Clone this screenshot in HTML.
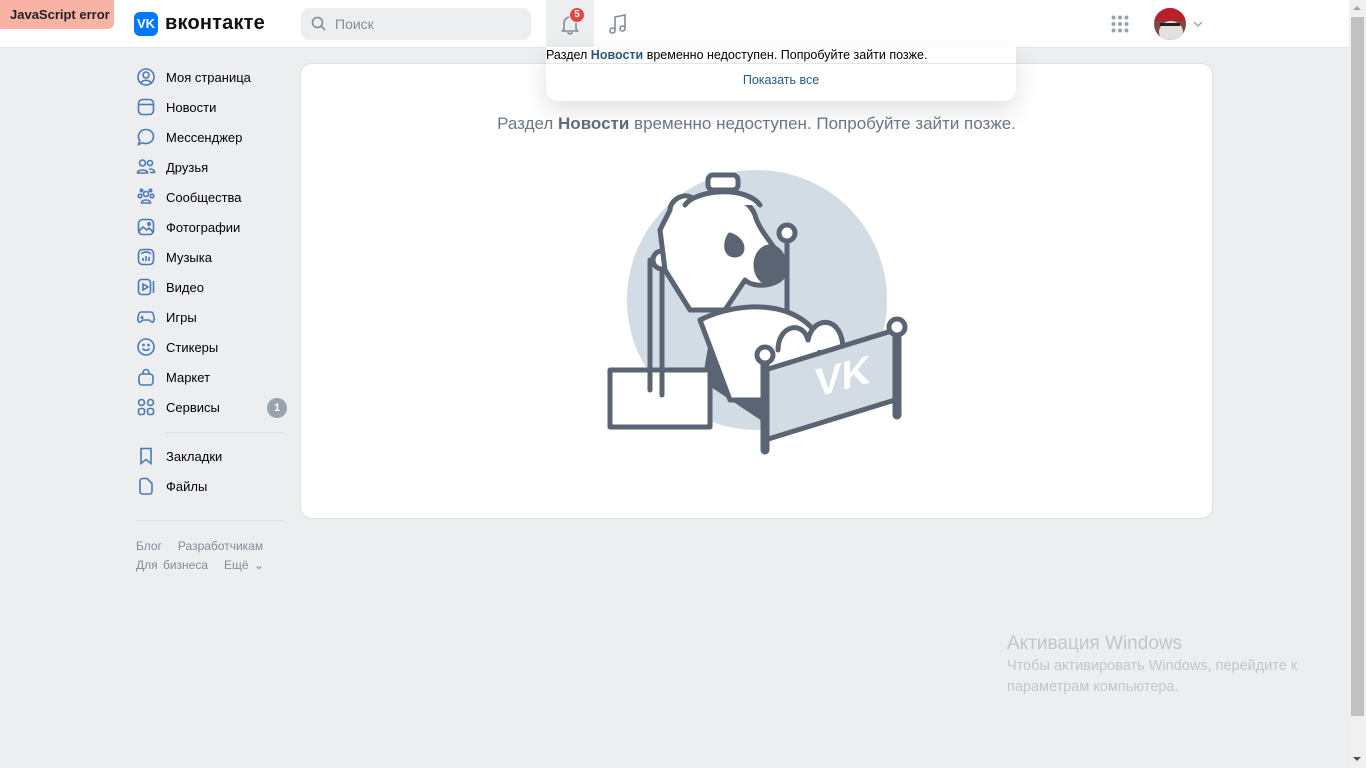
<!DOCTYPE html>
<html><head><meta charset="utf-8"><style>
*{margin:0;padding:0;box-sizing:border-box}
body{width:1366px;height:768px;background:#edeef0;font-family:"Liberation Sans","Noto Sans CJK SC",sans-serif;position:relative;overflow:hidden;color:#000}
.hdr{position:absolute;left:0;top:0;width:1349px;height:48px;background:#fff;border-bottom:1px solid #e3e4e8}
.abs{position:absolute}
.nav div{position:absolute;left:136px;height:20px;display:flex;align-items:center;font-size:13px;color:#000}
.nav svg{width:20px;height:20px;margin-right:10px;fill:none;stroke:#4b79b8;stroke-width:1.6}
.scroll{position:absolute;left:1349px;top:0;width:17px;height:768px;background:#f0f0f0}
</style></head><body>
<div class="hdr"></div>
<div class="abs" style="left:0;top:0;width:114px;height:29px;background:#f9b3a5;border-radius:0 0 6px 0;font-size:13px;font-weight:bold;color:#222;padding:7px 0 0 10px">JavaScript error</div>
<div class="abs" style="left:134px;top:12px;width:24px;height:24px;background:#0077ff;border-radius:6px;color:#fff;font-weight:bold;font-size:13px;text-align:center;line-height:24px">VK</div>
<div class="abs" style="left:165px;top:12px;font-size:20px;font-weight:bold;color:#111;letter-spacing:0.2px">вконтакте</div>
<div class="abs" style="left:301px;top:8px;width:230px;height:32px;background:#edeef0;border-radius:8px"></div>
<svg class="abs" style="left:311px;top:16px" width="16" height="16" viewBox="0 0 16 16"><circle cx="6.5" cy="6.5" r="5" fill="none" stroke="#818c99" stroke-width="1.6"/><path d="M10.3 10.3 14 14" stroke="#818c99" stroke-width="1.6"/></svg>
<div class="abs" style="left:335px;top:16px;font-size:14px;color:#818c99">Поиск</div>
<div class="abs" style="left:546px;top:0;width:48px;height:48px;background:#edeef0"></div>
<svg class="abs" style="left:559px;top:13px" width="22" height="22" viewBox="0 0 22 22"><path d="M5 16V10a6 6 0 0 1 12 0v6l1.5 2h-15z M9 19a2 2 0 0 0 4 0" fill="none" stroke="#818c99" stroke-width="1.6"/></svg>
<div class="abs" style="left:569px;top:7px;width:16px;height:16px;border-radius:8px;background:#e64646;color:#fff;font-size:10px;font-weight:bold;text-align:center;line-height:13px;border:1.5px solid #edeef0">5</div>
<svg class="abs" style="left:607px;top:12px" width="22" height="24" viewBox="0 0 22 24"><path d="M8 18V5l10-2v13" fill="none" stroke="#818c99" stroke-width="1.6"/><circle cx="5.5" cy="18.5" r="2.5" fill="none" stroke="#818c99" stroke-width="1.6"/><circle cx="15.5" cy="16.5" r="2.5" fill="none" stroke="#818c99" stroke-width="1.6"/></svg>
<svg class="abs" style="left:1111px;top:15px" width="18" height="18"><g fill="#99a2ad"><circle cx="2.5" cy="2.5" r="2"/><circle cx="9" cy="2.5" r="2"/><circle cx="15.5" cy="2.5" r="2"/><circle cx="2.5" cy="9" r="2"/><circle cx="9" cy="9" r="2"/><circle cx="15.5" cy="9" r="2"/><circle cx="2.5" cy="15.5" r="2"/><circle cx="9" cy="15.5" r="2"/><circle cx="15.5" cy="15.5" r="2"/></g></svg>
<svg class="abs" style="left:1154px;top:8px" width="32" height="32" viewBox="0 0 32 32"><clipPath id="c"><circle cx="16" cy="16" r="16"/></clipPath><g clip-path="url(#c)"><rect width="32" height="32" fill="#7a4a44"/><path d="M0 0h32v13H0z" fill="#b8202a"/><ellipse cx="17" cy="24" rx="12" ry="11" fill="#e4e0de"/><path d="M6 15h20v3H6z" fill="#222"/></g></svg>
<svg class="abs" style="left:1193px;top:20px" width="10" height="8"><path d="M1 2l4 4 4-4" fill="none" stroke="#99a2ad" stroke-width="1.3"/></svg>

<div class="nav">
<div style="top:67px"><svg viewBox="0 0 20 20"><circle cx="10" cy="10" r="8"/><circle cx="10" cy="8" r="3"/><path d="M5 15.5c3-3 7-3 10 0"/></svg>Моя страница</div>
<div style="top:97px"><svg viewBox="0 0 20 20"><rect x="2.5" y="2.5" width="15" height="15" rx="4"/><path d="M2.5 7.5h15"/></svg>Новости</div>
<div style="top:127px"><svg viewBox="0 0 20 20"><path d="M10 2.5a7.5 7 0 1 1-3.5 13.2L2.5 17.5l1.3-4A7.5 7 0 0 1 10 2.5z"/></svg>Мессенджер</div>
<div style="top:157px"><svg viewBox="0 0 20 20"><circle cx="6.5" cy="6" r="3"/><circle cx="14" cy="6" r="2.5"/><path d="M1.5 16c0-4 10-4 10 0zM13 12c3 0 5.5 1 5.5 3.5H14"/></svg>Друзья</div>
<div style="top:187px"><svg viewBox="0 0 20 20"><circle cx="10" cy="7" r="2.5"/><path d="M5.5 16c0-4 9-4 9 0z"/><circle cx="4" cy="9" r="1.8"/><circle cx="16" cy="9" r="1.8"/><circle cx="5.5" cy="3.5" r="1.2"/><circle cx="14.5" cy="3.5" r="1.2"/></svg>Сообщества</div>
<div style="top:217px"><svg viewBox="0 0 20 20"><rect x="2.5" y="2.5" width="15" height="15" rx="4"/><path d="M3 14l4-4 4 3 2-2 4 4"/><circle cx="13" cy="7" r="1.3"/></svg>Фотографии</div>
<div style="top:247px"><svg viewBox="0 0 20 20"><rect x="2.5" y="2.5" width="15" height="15" rx="4"/><path d="M7 14v-3M10 14V9M13 14v-4M5 7a7 7 0 0 1 10 0"/></svg>Музыка</div>
<div style="top:277px"><svg viewBox="0 0 20 20"><rect x="2.5" y="2.5" width="12" height="15" rx="3"/><path d="M17.5 4v12M7 7v6l5-3z"/></svg>Видео</div>
<div style="top:307px"><svg viewBox="0 0 20 20"><path d="M5 5h10c3 0 4 9 2 10s-3-2-4-2H7c-1 0-2 3-4 2s-1-10 2-10zM6 9v3M4.5 10.5h3"/></svg>Игры</div>
<div style="top:337px"><svg viewBox="0 0 20 20"><circle cx="10" cy="10" r="8"/><path d="M6.5 11.5c2 2.5 5 2.5 7 0"/><circle cx="7.5" cy="8" r=".6"/><circle cx="12.5" cy="8" r=".6"/></svg>Стикеры</div>
<div style="top:367px"><svg viewBox="0 0 20 20"><rect x="3" y="7" width="14" height="11" rx="3"/><path d="M7 7V5.5a3 3 0 0 1 6 0V7M8 12h.1M12 12h.1"/></svg>Маркет</div>
<div style="top:397px"><svg viewBox="0 0 20 20"><circle cx="5.5" cy="5.5" r="3"/><circle cx="14.5" cy="5.5" r="3"/><rect x="2.5" y="11.5" width="6" height="6" rx="2"/><rect x="11.5" y="11.5" width="6" height="6" rx="2"/></svg>Сервисы</div>
<div style="top:446px"><svg viewBox="0 0 20 20"><path d="M5 2.5h10v15l-5-4-5 4z"/></svg>Закладки</div>
<div style="top:476px"><svg viewBox="0 0 20 20"><path d="M4 5a2.5 2.5 0 0 1 2.5-2.5H11l5 5v8a2.5 2.5 0 0 1-2.5 2.5h-7A2.5 2.5 0 0 1 4 15.5z"/></svg>Файлы</div>
</div>
<div class="abs" style="left:267px;top:398px;width:20px;height:20px;border-radius:10px;background:#99a2ad;color:#fff;font-size:11px;font-weight:bold;text-align:center;line-height:20px">1</div>
<div class="abs" style="left:166px;top:432px;width:118px;height:1px;background:#dce1e6"></div>
<div class="abs" style="left:136px;top:520px;width:148px;height:1px;background:#dce1e6"></div>
<div class="abs" style="left:136px;top:539px;font-size:12px;color:#818c99;word-spacing:2px">Блог&nbsp;&nbsp;&nbsp;Разработчикам</div>
<div class="abs" style="left:136px;top:558px;font-size:12px;color:#818c99;word-spacing:2px">Для бизнеса&nbsp;&nbsp;&nbsp;Ещё ⌄</div>

<div class="abs" style="left:300px;top:63px;width:913px;height:456px;background:#fff;border:1px solid #dce1e6;border-radius:12px"></div>
<div class="abs" style="left:300px;top:114px;width:913px;text-align:center;font-size:17px;color:#6d7885">Раздел <b style="color:#626d7a">Новости</b> временно недоступен. Попробуйте зайти позже.</div>

<svg class="abs" style="left:600px;top:160px" width="320" height="310" viewBox="0 0 320 310">
<circle cx="157" cy="140" r="130" fill="#d3dce5"/>
<g fill="none" stroke="#5a6472" stroke-width="5" stroke-linejoin="round" stroke-linecap="round">
<path d="M110 190l55 40v30l-60-40z" fill="#5a6472"/>
<rect x="10" y="210" width="100" height="57" fill="#fff"/>
<path d="M50 100v130"/><circle cx="62" cy="100" r="9" fill="#fff"/><path d="M62 110v125"/>
<circle cx="187" cy="73" r="8" fill="#fff"/><path d="M187 82v80"/>
<path d="M70 50c0-10 15-20 25-10 15-5 50-10 60 15 5 20 30 40 30 55 0 15-30 20-40 10l-20 30-35 0-25-40-5-40z" fill="#fff"/>
<ellipse cx="170" cy="105" rx="14" ry="18" fill="#5a6472"/>
<path d="M130 75c-5 8 -5 20 5 20s10-15 -5-20z" fill="#5a6472"/>
<rect x="108" y="15" width="30" height="15" rx="5" fill="#fff"/>
<path d="M85 45c10-15 60-20 75 0" fill="#fff"/>
<path d="M100 160c40-20 100-20 120 20v60H130z" fill="#fff"/>
<path d="M178 190c0-25 25-30 30-10 5-25 35-25 35 10" fill="#fff"/>
<path d="M165 210l130-40v70l-130 40z" fill="#d3dce5"/>
<path d="M165 195v95" stroke-width="9"/><circle cx="165" cy="195" r="8" fill="#fff"/>
<path d="M297 170v85" stroke-width="9"/><circle cx="297" cy="167" r="8" fill="#fff"/>
</g>
<text x="215" y="235" font-family="Liberation Sans,sans-serif" font-weight="bold" font-size="40" fill="#fff" transform="skewY(-15) translate(0,60)">VK</text>
</svg>

<div class="abs" style="left:546px;top:47px;width:470px;height:54px;background:#fff;border-radius:0 0 12px 12px;box-shadow:0 10px 24px rgba(0,0,0,.12)"></div>
<div class="abs" style="left:546px;top:48px;font-size:12.5px;color:#000">Раздел <b style="color:#2a5885">Новости</b> временно недоступен. Попробуйте зайти позже.</div>
<div class="abs" style="left:546px;top:63px;width:470px;height:1px;background:#e3e4e8"></div>
<div class="abs" style="left:546px;top:73px;width:470px;text-align:center;font-size:12.5px;color:#2a5885">Показать все</div>

<div class="abs" style="left:1007px;top:633px;font-size:19px;color:#c3c5c8">Активация Windows</div>
<div class="abs" style="left:1007px;top:656px;font-size:14.5px;color:#c3c5c8;line-height:21px">Чтобы активировать Windows, перейдите к<br>параметрам компьютера.</div>

<div class="scroll"><div style="position:absolute;left:2px;top:17px;width:13px;height:699px;background:#c1c1c1"></div>
<div style="position:absolute;left:4px;top:6px;border:4px solid transparent;border-bottom:4px solid #a3a3a3;border-top:0"></div>
<div style="position:absolute;left:4px;top:757px;border:4px solid transparent;border-top:4px solid #505050;border-bottom:0"></div></div>
</body></html>
